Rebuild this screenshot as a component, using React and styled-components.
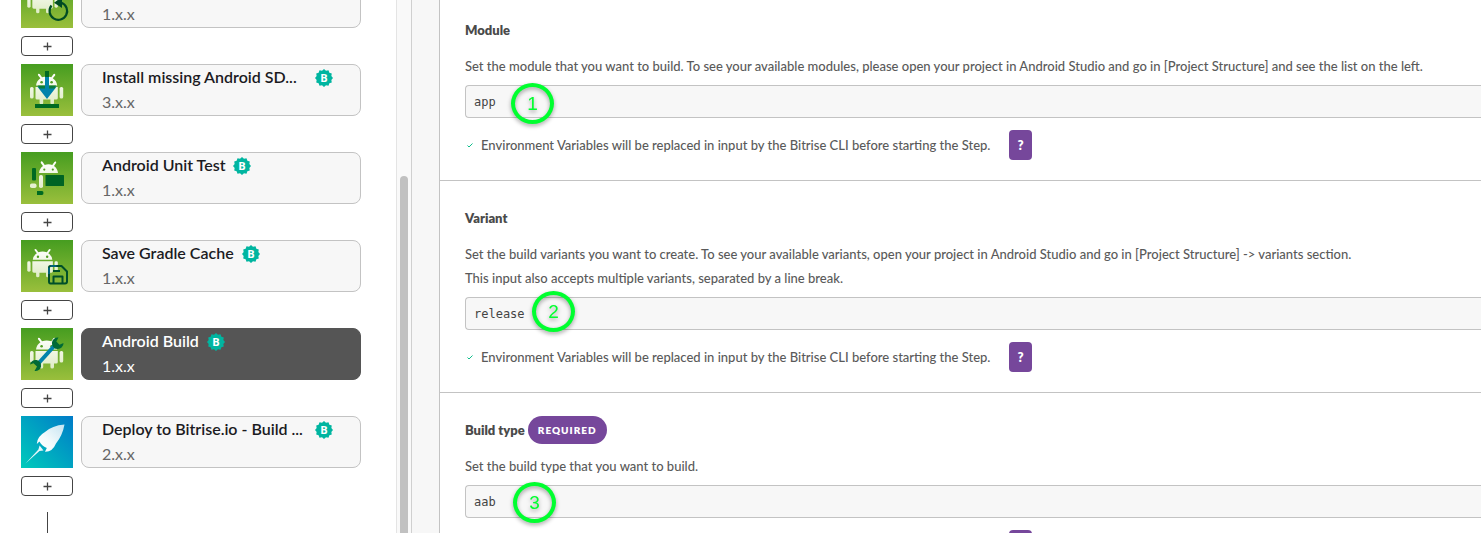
import React from "react";
import styled, { createGlobalStyle, css } from "styled-components";

const GlobalStyle = createGlobalStyle`
  *, *::before, *::after { box-sizing: border-box; }
  body {
    margin: 0;
    background: #fff;
    color: #5a5a5a;
    font-family: Lato, "Open Sans", sans-serif;
    font-size: 13px;
    font-weight: 500;
    line-height: 24px;
  }
`;

const Page = styled.div`
  display: flex;
  height: 100vh;
  overflow: hidden;
`;

/* Workflow steps */

const Sidebar = styled.nav`
  flex: 0 0 396px;
  overflow: hidden;
  padding-left: 21px;
`;

const StepList = styled.ol`
  list-style: none;
  margin: -24px 0 0;
  padding: 0;
  width: 340px;
`;

const StepItem = styled.li`
  display: flex;
  flex-direction: column;
  gap: 8px;
  margin-bottom: 8px;
`;

const StepRow = styled.div`
  display: flex;
  gap: 8px;
  height: 52px;
`;

const StepIcon = styled.svg`
  flex: none;
  width: 52px;
  height: 52px;
`;

const StepCard = styled.button`
  flex: 1;
  min-width: 0;
  padding: 0 20px;
  border: 1px solid #c3c3c3;
  border-radius: 8px;
  background: #f7f7f7;
  color: #666;
  font: inherit;
  font-size: 16px;
  font-weight: 400;
  text-align: left;
  ${(p) =>
    p.$active &&
    css`
      border-color: #555;
      background: #555;
      color: #fff;
    `}
`;

const StepHeading = styled.span`
  display: flex;
  align-items: center;
  gap: 8px;
  height: 25px;
`;

const StepTitle = styled.span`
  flex: ${(p) => (p.$clipped ? "0 0 205px" : "none")};
  margin-bottom: 2px;
  color: ${(p) => (p.$active ? "#fff" : "#1b1b1f")};
  font-weight: 600;
  white-space: nowrap;
`;

const StepVersion = styled.span`
  display: block;
  height: 24px;
  line-height: 22px;
`;

const VerifiedBadge = styled.svg`
  flex: none;
  width: 18px;
  height: 18px;
`;

const AddButton = styled.button`
  display: flex;
  align-items: center;
  justify-content: center;
  width: 52px;
  height: 20px;
  padding: 0;
  border: 1px solid #444;
  border-radius: 4px;
  background: #fff;
  color: #444;
`;

const Connector = styled.div`
  width: 1px;
  height: 40px;
  margin: 16px 0 0 26px;
  background: #444;
`;

const ScrollTrack = styled.div`
  flex: 0 0 16px;
  padding: 176px 3px 0;
  border-left: 1px solid #e4e4e4;
  border-right: 1px solid #d0d0d0;
  background: #f9f9f9;
`;

const ScrollThumb = styled.div`
  width: 8px;
  height: 100%;
  border-radius: 4px 4px 0 0;
  background: #c1c1c1;
`;

const Gutter = styled.div`
  flex: 0 0 28px;
  border-right: 1px solid #c3c3c3;
  background: #f7f7f7;
`;

/* Step inputs */

const Settings = styled.main`
  flex: 1;
  min-width: 0;
  margin-top: -7px;
`;

const Section = styled.section`
  padding: 23px 0 20px 25px;
  border-bottom: 1px solid #c3c3c3;
`;

const LabelRow = styled.div`
  display: flex;
  align-items: center;
  gap: 3px;
  height: 28px;
  margin-bottom: 10px;
`;

const Label = styled.label`
  color: #4a4a4a;
  font-weight: 800;
`;

const Required = styled.span`
  padding: 0 10px;
  border-radius: 14px;
  background: #76479b;
  color: #fff;
  font-size: 10px;
  font-weight: 800;
  letter-spacing: 1px;
  line-height: 28px;
`;

const Description = styled.p`
  margin: 0;
`;

const Field = styled.div`
  position: relative;
  margin: 7px 0 12px;
`;

const TextInput = styled.input`
  display: block;
  width: 100%;
  height: 33px;
  padding: 0 8px;
  border: 1px solid #c3c3c3;
  border-right: 0;
  border-radius: 4px 0 0 4px;
  background: #f7f7f7;
  color: #444;
  font-family: "DejaVu Sans Mono", monospace;
  font-size: 12px;
`;

const Marker = styled.span`
  position: absolute;
  top: ${(p) => p.$top}px;
  left: ${(p) => p.$left}px;
  display: flex;
  align-items: center;
  justify-content: center;
  width: 43px;
  height: 41px;
  border: 4px solid #00ff2f;
  border-radius: 50%;
  color: #00ff2f;
  filter: drop-shadow(0 2px 2px rgba(0, 0, 0, 0.35));
  font-family: "Liberation Sans", sans-serif;
  font-size: 19px;
  pointer-events: none;
`;

const Hint = styled.div`
  display: flex;
  align-items: center;
  height: 30px;
`;

const HintText = styled.span`
  min-width: 522px;
`;

const HintCheck = styled.svg`
  width: 16px;
  height: 8px;
`;

const HelpButton = styled.button`
  width: 23px;
  height: 30px;
  margin-left: 6px;
  padding: 0;
  border: 0;
  border-radius: 4px;
  background: #76479b;
  color: #fff;
  font: inherit;
  font-weight: 800;
`;

const Robot = ({ fill, transform }) => (
  <g transform={transform} fill={fill}>
    <path d="M15 21.5 Q15.6 16.8 19.4 14.3 L17 11.2 Q16.6 10 17.6 9.7 Q18.4 9.6 18.9 10.3 L21 13.2 Q25.6 11.6 30.3 13.2 L32.4 10.3 Q33.1 9.5 33.9 9.9 Q34.6 10.5 34.1 11.4 L31.8 14.3 Q35.6 16.8 36.2 21.5 Z" />
    <rect x="9" y="23" width="3.6" height="11.5" rx="1.6" />
    <rect x="38.6" y="23" width="3.6" height="11.5" rx="1.6" />
    <path d="M14.5 23 H36.8 V34 Q36.8 35.6 35.2 35.6 H33 V39 Q33 40.6 31.2 40.6 Q29.4 40.6 29.4 39 V35.6 H22.2 V39 Q22.2 40.6 20.4 40.6 Q18.6 40.6 18.6 39 V35.6 H16.1 Q14.5 35.6 14.5 34 Z" />
    <circle cx="20.6" cy="18.2" r="1.3" fill="#519f22" />
    <circle cx="30.6" cy="18.2" r="1.3" fill="#519f22" />
  </g>
);

const SMALL = "translate(-2 0) scale(.92)";

const drawings = {
  restore: (fill) => (
    <>
      <Robot fill={fill} transform={SMALL} />
      <path d="M30.5 29.5 A8.8 8.8 0 1 0 40.5 26.8" fill="none" stroke="#004b24" strokeWidth="2.2" />
      <path d="M33 26.8 L41 21 V32 Z" fill="#004b24" />
    </>
  ),
  install: (fill) => (
    <>
      <Robot fill={fill} />
      <path d="M24 7 h4 v6 h-4z M14 40 h24 v4 h-24z" fill="#006a22" />
      <path d="M24 13 h4 v9.5 h7.7 L26 35 L16.3 22.5 H24z" fill="#0083ab" />
      <path d="M17 21.5 h7 v3 h-5.5z M28 21.5 h7 l-1.5 3 h-5.5z" fill="#0a7b3d" />
    </>
  ),
  test: (fill) => (
    <>
      <path d="M18 21 Q18.5 16.4 22 14 L19.8 11 Q19.5 9.8 20.4 9.3 Q21.2 9.2 21.7 10 L23.7 13 Q27.5 11.5 31.3 13 L33.4 10 Q34.1 9 34.9 9.6 Q35.5 10.2 35 11 L33 14 Q36.4 16.4 37 21 Z" fill={fill} />
      <circle cx="23.3" cy="17.6" r="1.1" fill="#519f22" />
      <circle cx="31.8" cy="17.6" r="1.1" fill="#519f22" />
      <rect x="18" y="23" width="4" height="13" rx="1.8" fill={fill} />
      <rect x="9" y="31.5" width="6.5" height="4.5" rx="1.8" fill={fill} />
      <rect x="11" y="16" width="4" height="12.5" rx="1" fill="#006a22" />
      <rect x="24.5" y="23" width="18.5" height="11" rx=".5" fill="#006424" />
      <path d="M16 39 h5 q1.5 0 1.5 2 t-1.5 2 h-5z" fill="#006a22" />
    </>
  ),
  save: (fill) => (
    <>
      <Robot fill={fill} transform={SMALL} />
      <g fill="none" stroke="#004f29" strokeWidth="2" strokeLinejoin="round">
        <path d="M29.5 26 H40.5 L46 31.5 V41.5 Q46 43.5 44 43.5 H29.5 Q28 43.5 28 41.5 V27.5 Q28 26 29.5 26 Z" />
        <path d="M32.5 43 V36.5 H41.5 V43 M32 31 h7" />
      </g>
      <path d="M28 27.5 V34 M29.5 26 H35.5" fill="none" stroke="#00627a" strokeWidth="2" />
    </>
  ),
  build: (fill) => (
    <>
      <Robot fill={fill} />
      <path d="M16 37 L35 16" stroke="#0083ab" strokeWidth="4" />
      <path d="M37.5 9.5 A5.8 5.8 0 1 0 42.5 15 L38.5 16.8 L35.3 13.4 Z" fill="#006a35" />
      <path d="M13.5 43 A5.6 5.6 0 1 0 9 36.5 L12.5 35.2 L16 38.5 Z" fill="#006a35" />
    </>
  ),
  deploy: () => (
    <>
      <path d="M43.5 8.5 Q31 9.5 24 16 Q16 20.5 15.8 28 L18.5 25.5 Q20.5 29.5 25.8 32 L24 35.7 Q31.5 36 35 27.5 Q41.5 19.5 43.5 8.5 Z" fill="url(#rocket)" />
      <path d="M18.6 29.5 L17.4 33.5 L4.5 47.5 L18.5 35 L22.5 34.5 Z" fill="#e5f6f8" />
    </>
  ),
};

const StepGlyph = ({ kind }) => (
  <StepIcon viewBox="0 0 52 52" aria-hidden="true">
    <defs>
      <linearGradient id="leaf" x1="0" y1="0" x2="0" y2="1">
        <stop offset="0" stopColor="#469d20" />
        <stop offset="1" stopColor="#9abf3c" />
      </linearGradient>
      <linearGradient id="sky" x1="0" y1="1" x2="1" y2="0">
        <stop offset="0" stopColor="#00cbbb" />
        <stop offset="1" stopColor="#007bc8" />
      </linearGradient>
      <linearGradient id="shell" gradientUnits="userSpaceOnUse" x1="0" y1="9" x2="0" y2="40">
        <stop offset="0" stopColor="#fff" />
        <stop offset="1" stopColor="#dfecc5" />
      </linearGradient>
      <linearGradient id="rocket" x1="1" y1="0" x2="0" y2="1">
        <stop offset="0" stopColor="#c5e4f2" />
        <stop offset=".6" stopColor="#f4fbfc" />
        <stop offset="1" stopColor="#fff" />
      </linearGradient>
    </defs>
    <rect width="52" height="52" fill={kind === "deploy" ? "url(#sky)" : "url(#leaf)"} />
    {drawings[kind]("url(#shell)")}
  </StepIcon>
);

const badgePoints = Array.from({ length: 24 }, (_, i) => {
  const radius = i % 2 ? 7.6 : 9;
  const angle = (i * Math.PI) / 12;
  return `${(9 + radius * Math.sin(angle)).toFixed(2)},${(9 - radius * Math.cos(angle)).toFixed(2)}`;
}).join(" ");

const BadgeLetter = styled.text`
  fill: #fff;
  font-family: "Open Sans", sans-serif;
  font-size: 11px;
  font-weight: 700;
  text-anchor: middle;
`;

const Verified = () => (
  <VerifiedBadge viewBox="0 0 18 18" role="img" aria-label="Made by Bitrise">
    <polygon points={badgePoints} fill="#00b5a0" />
    <BadgeLetter x="9" y="13">B</BadgeLetter>
  </VerifiedBadge>
);

const steps = [
  { kind: "restore", title: "Restore Gradle Cache", version: "1.x.x" },
  { kind: "install", title: "Install missing Android SD...", version: "3.x.x", clipped: true },
  { kind: "test", title: "Android Unit Test", version: "1.x.x" },
  { kind: "save", title: "Save Gradle Cache", version: "1.x.x" },
  { kind: "build", title: "Android Build", version: "1.x.x", active: true },
  { kind: "deploy", title: "Deploy to Bitrise.io - Build ...", version: "2.x.x", clipped: true },
];

const inputs = [
  {
    id: "module",
    label: "Module",
    value: "app",
    lines: [
      "Set the module that you want to build. To see your available modules, please open your project in Android Studio and go in [Project Structure] and see the list on the left.",
    ],
    marker: { text: "1", left: 46, top: -2 },
  },
  {
    id: "variant",
    label: "Variant",
    value: "release",
    lines: [
      "Set the build variants you want to create. To see your available variants, open your project in Android Studio and go in [Project Structure] -> variants section.",
      "This input also accepts multiple variants, separated by a line break.",
    ],
    marker: { text: "2", left: 67, top: -6 },
  },
  {
    id: "build-type",
    label: "Build type",
    value: "aab",
    required: true,
    lines: ["Set the build type that you want to build."],
    marker: { text: "3", left: 48, top: -3 },
  },
];

const Step = ({ kind, title, version, active, clipped }) => (
  <StepItem>
    <StepRow>
      <StepGlyph kind={kind} />
      <StepCard type="button" $active={active}>
        <StepHeading>
          <StepTitle $active={active} $clipped={clipped}>{title}</StepTitle>
          <Verified />
        </StepHeading>
        <StepVersion>{version}</StepVersion>
      </StepCard>
    </StepRow>
    <AddButton type="button" aria-label="Add step">
      <svg width="9" height="9" viewBox="0 0 9 9" aria-hidden="true">
        <path d="M4.5 .5 V8.5 M.5 4.5 H8.5" stroke="currentColor" strokeWidth="1.3" />
      </svg>
    </AddButton>
  </StepItem>
);

const InputSection = ({ id, label, value, lines, marker, required }) => (
  <Section>
    <LabelRow>
      <Label htmlFor={id}>{label}</Label>
      {required && <Required>REQUIRED</Required>}
    </LabelRow>
    {lines.map((line) => (
      <Description key={line}>{line}</Description>
    ))}
    <Field>
      <TextInput id={id} type="text" defaultValue={value} />
      <Marker $left={marker.left} $top={marker.top}>{marker.text}</Marker>
    </Field>
    <Hint>
      <HintCheck viewBox="0 0 16 8" aria-hidden="true">
        <path d="M2.5 4.5 L4 6 L7.5 2.5" fill="none" stroke="#0dbd8b" />
      </HintCheck>
      <HintText>
        Environment Variables will be replaced in input by the Bitrise CLI before starting the Step.
      </HintText>
      <HelpButton type="button">?</HelpButton>
    </Hint>
  </Section>
);

export default function App() {
  return (
    <>
      <GlobalStyle />
      <Page>
        <Sidebar aria-label="Workflow steps">
          <StepList>
            {steps.map((step) => (
              <Step key={step.kind} {...step} />
            ))}
          </StepList>
          <Connector />
        </Sidebar>
        <ScrollTrack>
          <ScrollThumb />
        </ScrollTrack>
        <Gutter />
        <Settings>
          {inputs.map((input) => (
            <InputSection key={input.id} {...input} />
          ))}
        </Settings>
      </Page>
    </>
  );
}
